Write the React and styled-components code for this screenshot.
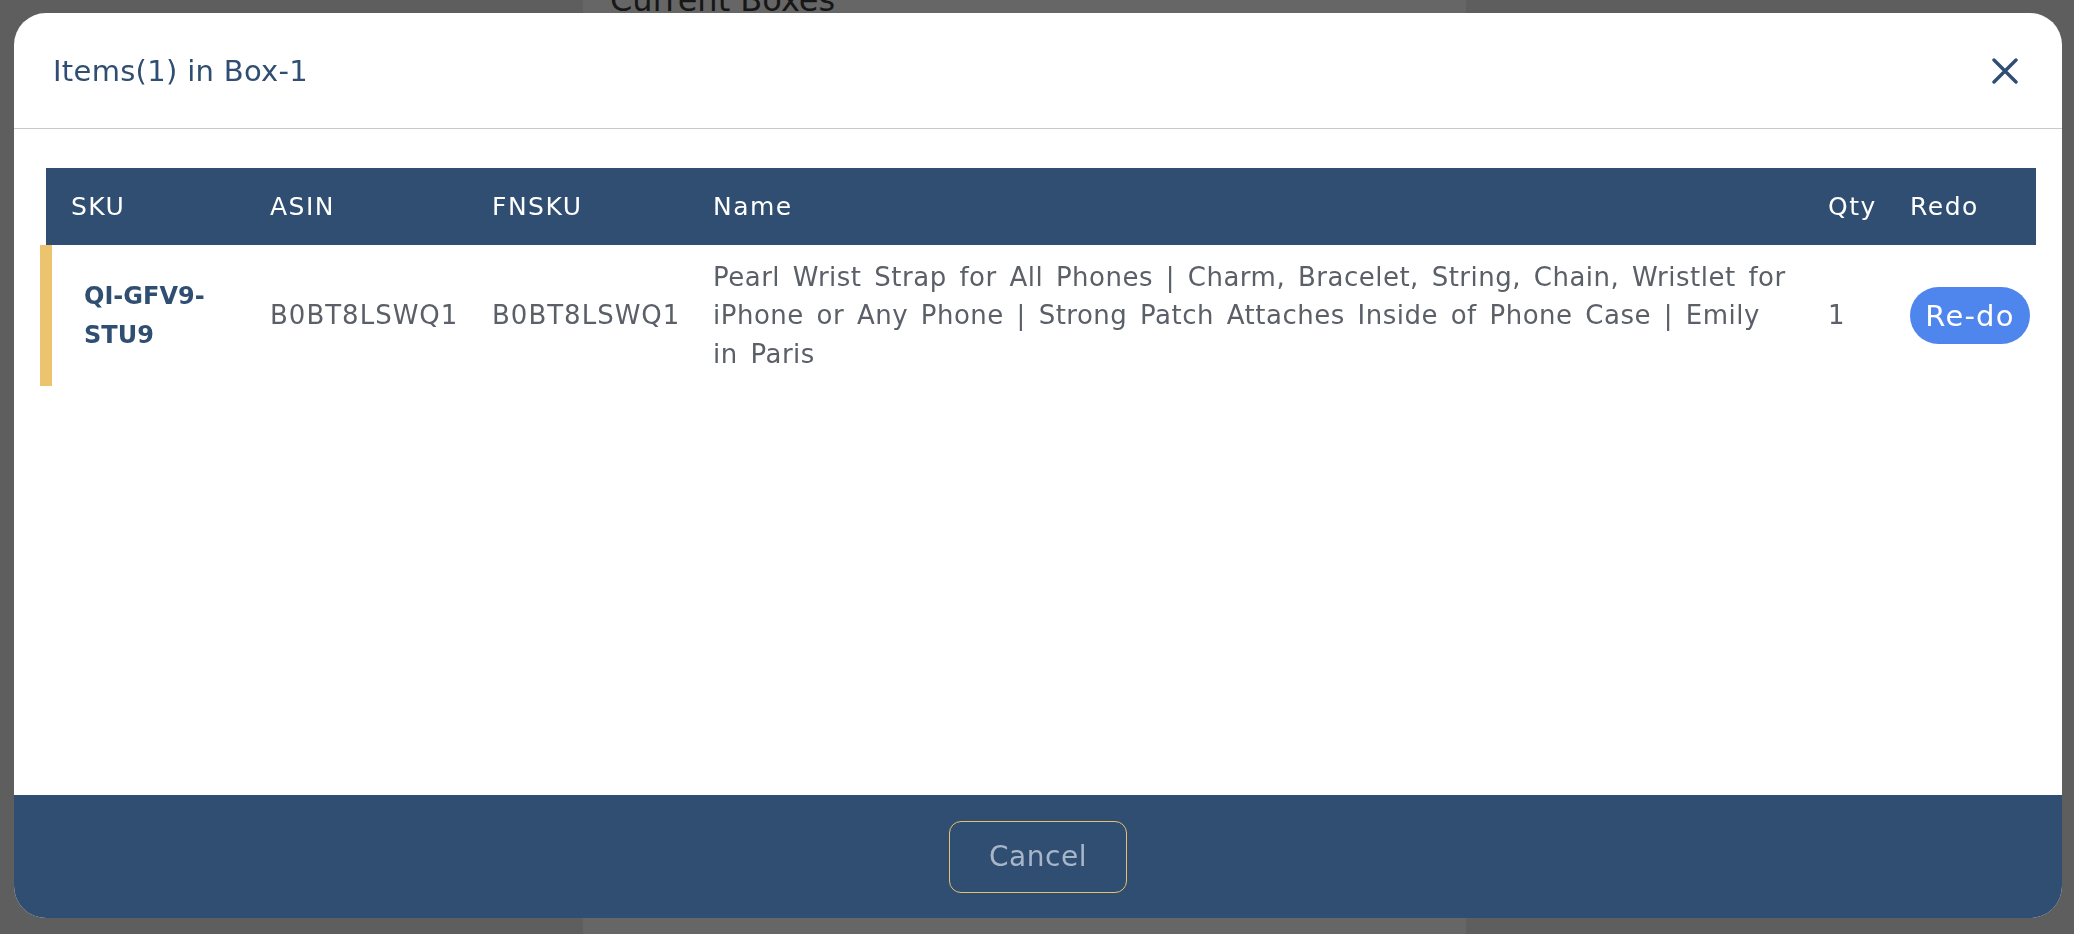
import styled, { createGlobalStyle } from "styled-components";

const GlobalStyle = createGlobalStyle`
  * { box-sizing: border-box; }
  html, body {
    margin: 0;
    padding: 0;
    width: 100%;
    height: 100%;
    overflow: hidden;
    background: #ebebeb;
    font-family: "DejaVu Sans", "Liberation Sans", sans-serif;
  }
`;

const Page = styled.div`
  display: flex;
  height: 934px;
  padding-left: 583px;
`;

const Panel = styled.div`
  width: 883px;
  height: 100%;
  background: #fff;
  padding-left: 27px;
`;

const PanelTitle = styled.h2`
  margin: -19px 0 0;
  font-size: 32px;
  font-weight: 400;
  color: #3a3a3a;
`;

const Overlay = styled.div`
  position: fixed;
  inset: 0;
  background: rgba(0, 0, 0, 0.6);
  padding: 13px 12px 16px 14px;
  display: flex;
`;

const Modal = styled.div`
  flex: 1;
  display: flex;
  flex-direction: column;
  background: #fff;
  border-radius: 32px;
  overflow: hidden;
`;

const Header = styled.div`
  height: 116px;
  flex-shrink: 0;
  display: flex;
  align-items: center;
  justify-content: space-between;
  padding: 0 44px 0 39px;
  border-bottom: 1.5px solid #c6cad0;
`;

const Title = styled.h1`
  margin: 0;
  font-size: 29px;
  font-weight: 400;
  letter-spacing: 0.3px;
  color: #2f4e71;
`;

const CloseButton = styled.button`
  border: 0;
  background: none;
  padding: 0;
  display: flex;
  cursor: pointer;
`;

const Body = styled.div`
  flex: 1;
  padding: 39px 26px 0 32px;
`;

const columns = "224px 222px 221px 1fr 82px 126px";

const HeadRow = styled.div`
  display: grid;
  grid-template-columns: ${columns};
  align-items: center;
  height: 77px;
  background: #2f4e71;
  color: #fff;
  font-size: 25px;
  letter-spacing: 1.5px;
`;

const HeadCell = styled.div`
  padding-left: ${(p) => (p.$first ? "25px" : "0")};
`;

const Row = styled.div`
  display: grid;
  grid-template-columns: ${columns};
  align-items: center;
  min-height: 141px;
  padding: 12px 0;
  position: relative;
`;

const Marker = styled.span`
  position: absolute;
  left: -6px;
  top: 0;
  bottom: 0;
  width: 12px;
  background: #ecc46e;
`;

const SkuCell = styled.div`
  padding: 0 40px 0 38px;
  font-size: 24px;
  font-weight: 700;
  line-height: 39px;
  color: #2f4e71;
`;

const Cell = styled.div`
  font-size: 26px;
  line-height: 38.5px;
  letter-spacing: ${(p) => (p.$wrap ? "0.5px" : "1px")};
  word-spacing: ${(p) => (p.$wrap ? "4px" : "0")};
  color: #5b6068;
  padding-right: ${(p) => p.$pr || "0"};
`;

const RedoButton = styled.button`
  width: 120px;
  height: 57px;
  padding: 0;
  border: 0;
  border-radius: 29px;
  background: #4f86ee;
  color: #fff;
  font-family: inherit;
  font-size: 29px;
  letter-spacing: 1.2px;
  cursor: pointer;
`;

const Footer = styled.div`
  height: 123px;
  flex-shrink: 0;
  background: #2f4e71;
  display: flex;
  align-items: center;
  justify-content: center;
`;

const CancelButton = styled.button`
  width: 178px;
  height: 72px;
  padding: 0;
  border: 1.5px solid #e6c26c;
  border-radius: 12px;
  background: transparent;
  color: #a8b6c9;
  font-family: inherit;
  font-size: 28px;
  letter-spacing: 0.5px;
  cursor: pointer;
`;

const items = [
  {
    sku: "QI-GFV9-STU9",
    asin: "B0BT8LSWQ1",
    fnsku: "B0BT8LSWQ1",
    name:
      "Pearl Wrist Strap for All Phones | Charm, Bracelet, String, Chain, Wristlet for iPhone or Any Phone | Strong Patch Attaches Inside of Phone Case | Emily in Paris",
    qty: 1,
  },
];

const App = () => {
  return (
    <>
      <GlobalStyle />
      <Page>
        <Panel>
          <PanelTitle>Current Boxes</PanelTitle>
        </Panel>
      </Page>
      <Overlay>
        <Modal>
          <Header>
            <Title>Items({items.length}) in Box-1</Title>
            <CloseButton aria-label="Close">
              <svg width="26" height="26" viewBox="0 0 26 26">
                <path
                  d="M2 2 24 24M24 2 2 24"
                  stroke="#2f4e71"
                  strokeWidth="3.4"
                  strokeLinecap="round"
                  fill="none"
                />
              </svg>
            </CloseButton>
          </Header>
          <Body>
            <HeadRow>
              <HeadCell $first>SKU</HeadCell>
              <HeadCell>ASIN</HeadCell>
              <HeadCell>FNSKU</HeadCell>
              <HeadCell>Name</HeadCell>
              <HeadCell>Qty</HeadCell>
              <HeadCell>Redo</HeadCell>
            </HeadRow>
            {items.map((item) => (
              <Row key={item.sku}>
                <Marker />
                <SkuCell>{item.sku}</SkuCell>
                <Cell>{item.asin}</Cell>
                <Cell>{item.fnsku}</Cell>
                <Cell $wrap $pr="37px">{item.name}</Cell>
                <Cell>{item.qty}</Cell>
                <div>
                  <RedoButton>Re-do</RedoButton>
                </div>
              </Row>
            ))}
          </Body>
          <Footer>
            <CancelButton>Cancel</CancelButton>
          </Footer>
        </Modal>
      </Overlay>
    </>
  );
};

export default App;
